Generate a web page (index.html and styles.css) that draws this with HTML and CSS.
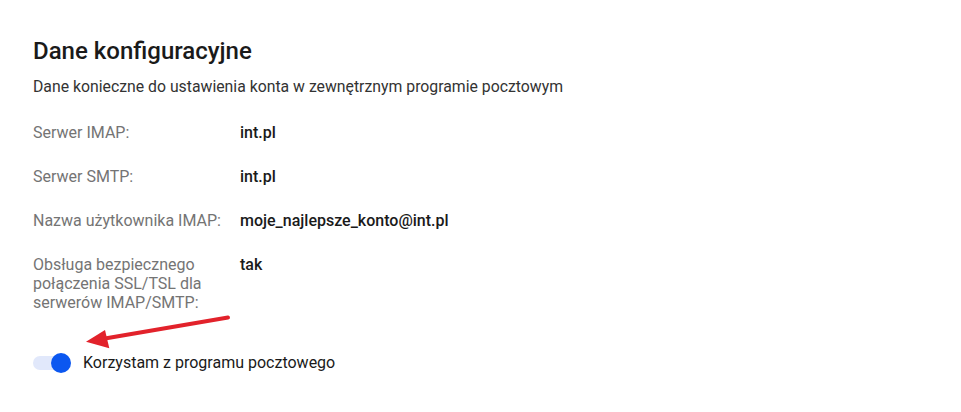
FILE: index.html
```html
<!DOCTYPE html>
<html lang="pl">
<head>
<meta charset="utf-8">
<title>Dane konfiguracyjne</title>
<link rel="stylesheet" href="styles.css">
</head>
<body>
<section class="config">
  <h2 class="config-title">Dane konfiguracyjne</h2>
  <p class="config-desc">Dane konieczne do ustawienia konta w zewnętrznym programie pocztowym</p>
  <dl class="config-list">
    <div class="config-row">
      <dt class="config-label">Serwer IMAP:</dt>
      <dd class="config-value">int.pl</dd>
    </div>
    <div class="config-row">
      <dt class="config-label">Serwer SMTP:</dt>
      <dd class="config-value">int.pl</dd>
    </div>
    <div class="config-row">
      <dt class="config-label">Nazwa użytkownika IMAP:</dt>
      <dd class="config-value">moje_najlepsze_konto@int.pl</dd>
    </div>
    <div class="config-row">
      <dt class="config-label">Obsługa bezpiecznego połączenia SSL/TSL dla serwerów IMAP/SMTP:</dt>
      <dd class="config-value">tak</dd>
    </div>
  </dl>
  <label class="switch-row">
    <span class="switch"><span class="switch-track"></span><span class="switch-knob"></span></span>
    <span class="switch-text">Korzystam z programu pocztowego</span>
  </label>
  <svg class="arrow" width="160" height="40" viewBox="0 0 160 40" aria-hidden="true">
    <line x1="146" y1="4.5" x2="20" y2="26" stroke="#e2222b" stroke-width="4" stroke-linecap="round"/>
    <polygon points="4,28.7 23,17 27.3,35.3" fill="#e2222b"/>
  </svg>
</section>
</body>
</html>
```

FILE: styles.css
```css
html, body {
  margin: 0;
  padding: 0;
  background: #ffffff;
}

body {
  font-family: Roboto, "Liberation Sans", Arial, sans-serif;
  color: #1b1b1b;
}

.config {
  position: relative;
  padding: 37px 33px 0 33px;
}

.config-title {
  margin: 0;
  font-size: 24px;
  line-height: 28px;
  font-weight: 500;
  color: #1a1a1a;
}

.config-desc {
  margin: 12px 0 0 0;
  font-size: 15.8px;
  line-height: 19px;
  color: #333333;
}

.config-list {
  margin: 27px 0 0 0;
  padding: 0;
}

.config-row {
  display: grid;
  grid-template-columns: 190px 1fr;
  gap: 17px;
  margin-bottom: 25px;
  font-size: 16px;
  line-height: 19px;
}

.config-label {
  margin: 0;
  color: #747474;
}

.config-value {
  margin: 0;
  font-weight: 500;
  color: #1a1a1a;
}

.switch-row {
  display: flex;
  align-items: center;
  gap: 12px;
  margin-top: 41px;
}

.switch {
  position: relative;
  width: 38px;
  height: 20px;
  flex: none;
}

.switch-track {
  position: absolute;
  left: 0;
  top: 3px;
  width: 36px;
  height: 14px;
  border-radius: 7px;
  background: #e1e8fb;
}

.switch-knob {
  position: absolute;
  right: 0;
  top: 0;
  width: 20px;
  height: 20px;
  border-radius: 50%;
  background: #0b57f0;
}

.switch-text {
  font-size: 16px;
  line-height: 20px;
  color: #1a1a1a;
}

.arrow {
  position: absolute;
  left: 82px;
  top: 313px;
}
```
